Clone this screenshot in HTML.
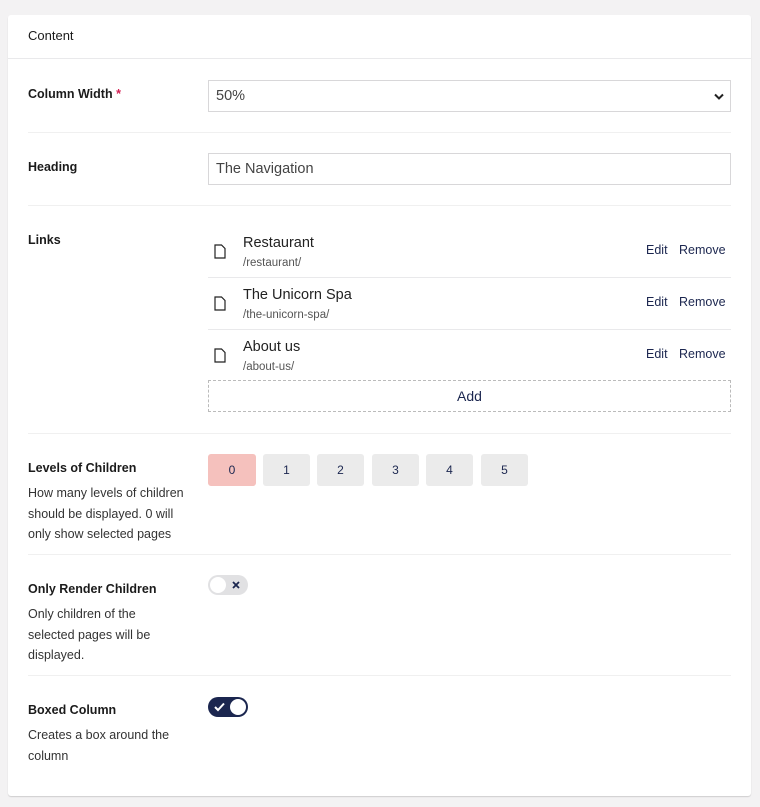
<!DOCTYPE html>
<html><head><style>
*{box-sizing:border-box;margin:0;padding:0}
body{width:760px;height:807px;background:#f3f2f3;font-family:"Liberation Sans",sans-serif;position:relative;overflow:hidden;color:#1b1b1b}
.card{position:absolute;left:8px;top:15px;width:743px;height:781px;background:#fff;border-radius:3px;box-shadow:0 1px 1px rgba(0,0,0,.15)}
.a{position:absolute;white-space:nowrap}
.hdr{left:0;top:43px;width:743px;height:1px;background:#e9e9eb}
.div{position:absolute;left:20px;width:703px;height:1px;background:#f0f0f0}
.lbl{font-size:12.5px;font-weight:bold;color:#1b1b1b}
.desc{font-size:12.5px;color:#333;line-height:20.5px;white-space:normal;width:170px}
.inp{position:absolute;left:200px;width:523px;height:32px;border:1px solid #d8d7d9;font-size:14.5px;color:#444;padding:0 7px;line-height:30px}
.row .t{font-size:14.5px;color:#222}
.row .u{font-size:11.5px;color:#555}
.act{font-size:12.5px;color:#1b264f}
.btn{position:absolute;top:439px;height:32px;width:47px;background:#ebebeb;border-radius:3px;font-size:12px;color:#1b264f;text-align:center;line-height:32px}
</style></head><body>
<div class="card">
<div class="a" style="left:20px;top:13px;font-size:13px;color:#1b1b1b">Content</div>
<div class="a hdr"></div>

<div class="a lbl" style="left:20px;top:72px">Column Width <span style="color:#d42054">*</span></div>
<div class="inp" style="top:65px">50%
<svg style="position:absolute;right:6px;top:12px" width="10" height="7" viewBox="0 0 10 7"><path d="M1 1.5 L5 5.5 L9 1.5" stroke="#222" stroke-width="2" fill="none"/></svg></div>
<div class="div" style="top:117px"></div>

<div class="a lbl" style="left:20px;top:145px">Heading</div>
<div class="inp" style="top:138px">The Navigation</div>
<div class="div" style="top:190px"></div>

<div class="a lbl" style="left:20px;top:218px">Links</div>
<div class="row">
<svg class="a" style="left:206px;top:229px" width="12" height="15" viewBox="0 0 12 15"><path d="M1 1 H7.5 L11 4.5 V14 H1 Z" fill="none" stroke="#222" stroke-width="1.2"/></svg>
<div class="a t" style="left:235px;top:220px">Restaurant</div>
<div class="a u" style="left:235px;top:242px">/restaurant/</div>
<div class="a act" style="left:638px;top:228px">Edit</div>
<div class="a act" style="left:671px;top:228px">Remove</div>
</div>
<div class="a" style="left:200px;top:262px;width:523px;height:1px;background:#e9e9eb"></div>
<div class="row">
<svg class="a" style="left:206px;top:281px" width="12" height="15" viewBox="0 0 12 15"><path d="M1 1 H7.5 L11 4.5 V14 H1 Z" fill="none" stroke="#222" stroke-width="1.2"/></svg>
<div class="a t" style="left:235px;top:272px">The Unicorn Spa</div>
<div class="a u" style="left:235px;top:294px">/the-unicorn-spa/</div>
<div class="a act" style="left:638px;top:280px">Edit</div>
<div class="a act" style="left:671px;top:280px">Remove</div>
</div>
<div class="a" style="left:200px;top:314px;width:523px;height:1px;background:#e9e9eb"></div>
<div class="row">
<svg class="a" style="left:206px;top:333px" width="12" height="15" viewBox="0 0 12 15"><path d="M1 1 H7.5 L11 4.5 V14 H1 Z" fill="none" stroke="#222" stroke-width="1.2"/></svg>
<div class="a t" style="left:235px;top:324px">About us</div>
<div class="a u" style="left:235px;top:346px">/about-us/</div>
<div class="a act" style="left:638px;top:332px">Edit</div>
<div class="a act" style="left:671px;top:332px">Remove</div>
</div>
<div class="a" style="left:200px;top:365px;width:523px;height:32px;border:1px dashed #bbb;text-align:center;line-height:30px;font-size:14px;color:#1b264f">Add</div>
<div class="div" style="top:418px"></div>

<div class="a lbl" style="left:20px;top:446px">Levels of Children</div>
<div class="a desc" style="left:20px;top:468px">How many levels of children should be displayed. 0 will only show selected pages</div>
<div class="btn" style="left:200px;width:48px;background:#f5c1bd">0</div>
<div class="btn" style="left:255px">1</div>
<div class="btn" style="left:309px">2</div>
<div class="btn" style="left:364px">3</div>
<div class="btn" style="left:418px">4</div>
<div class="btn" style="left:473px">5</div>
<div class="div" style="top:539px"></div>

<div class="a lbl" style="left:20px;top:567px">Only Render Children</div>
<div class="a desc" style="left:20px;top:589px;width:140px">Only children of the selected pages will be displayed.</div>
<div class="a" style="left:200px;top:560px;width:40px;height:20px;border-radius:10px;background:#e1e1e3">
<div class="a" style="left:2px;top:2px;width:16px;height:16px;border-radius:50%;background:#fff"></div>
<svg class="a" style="left:24px;top:6px" width="8" height="8" viewBox="0 0 8 8"><path d="M1 1 L7 7 M7 1 L1 7" stroke="#1b264f" stroke-width="1.8"/></svg>
</div>
<div class="div" style="top:660px"></div>

<div class="a lbl" style="left:20px;top:688px">Boxed Column</div>
<div class="a desc" style="left:20px;top:710px;width:160px">Creates a box around the column</div>
<div class="a" style="left:200px;top:682px;width:40px;height:20px;border-radius:10px;background:#1b264f">
<svg class="a" style="left:6px;top:5px" width="11" height="10" viewBox="0 0 11 10"><path d="M1 5 L4 8 L10 1.5" stroke="#fff" stroke-width="2" fill="none"/></svg>
<div class="a" style="left:22px;top:2px;width:16px;height:16px;border-radius:50%;background:#fff"></div>
</div>
</div>
</body></html>
